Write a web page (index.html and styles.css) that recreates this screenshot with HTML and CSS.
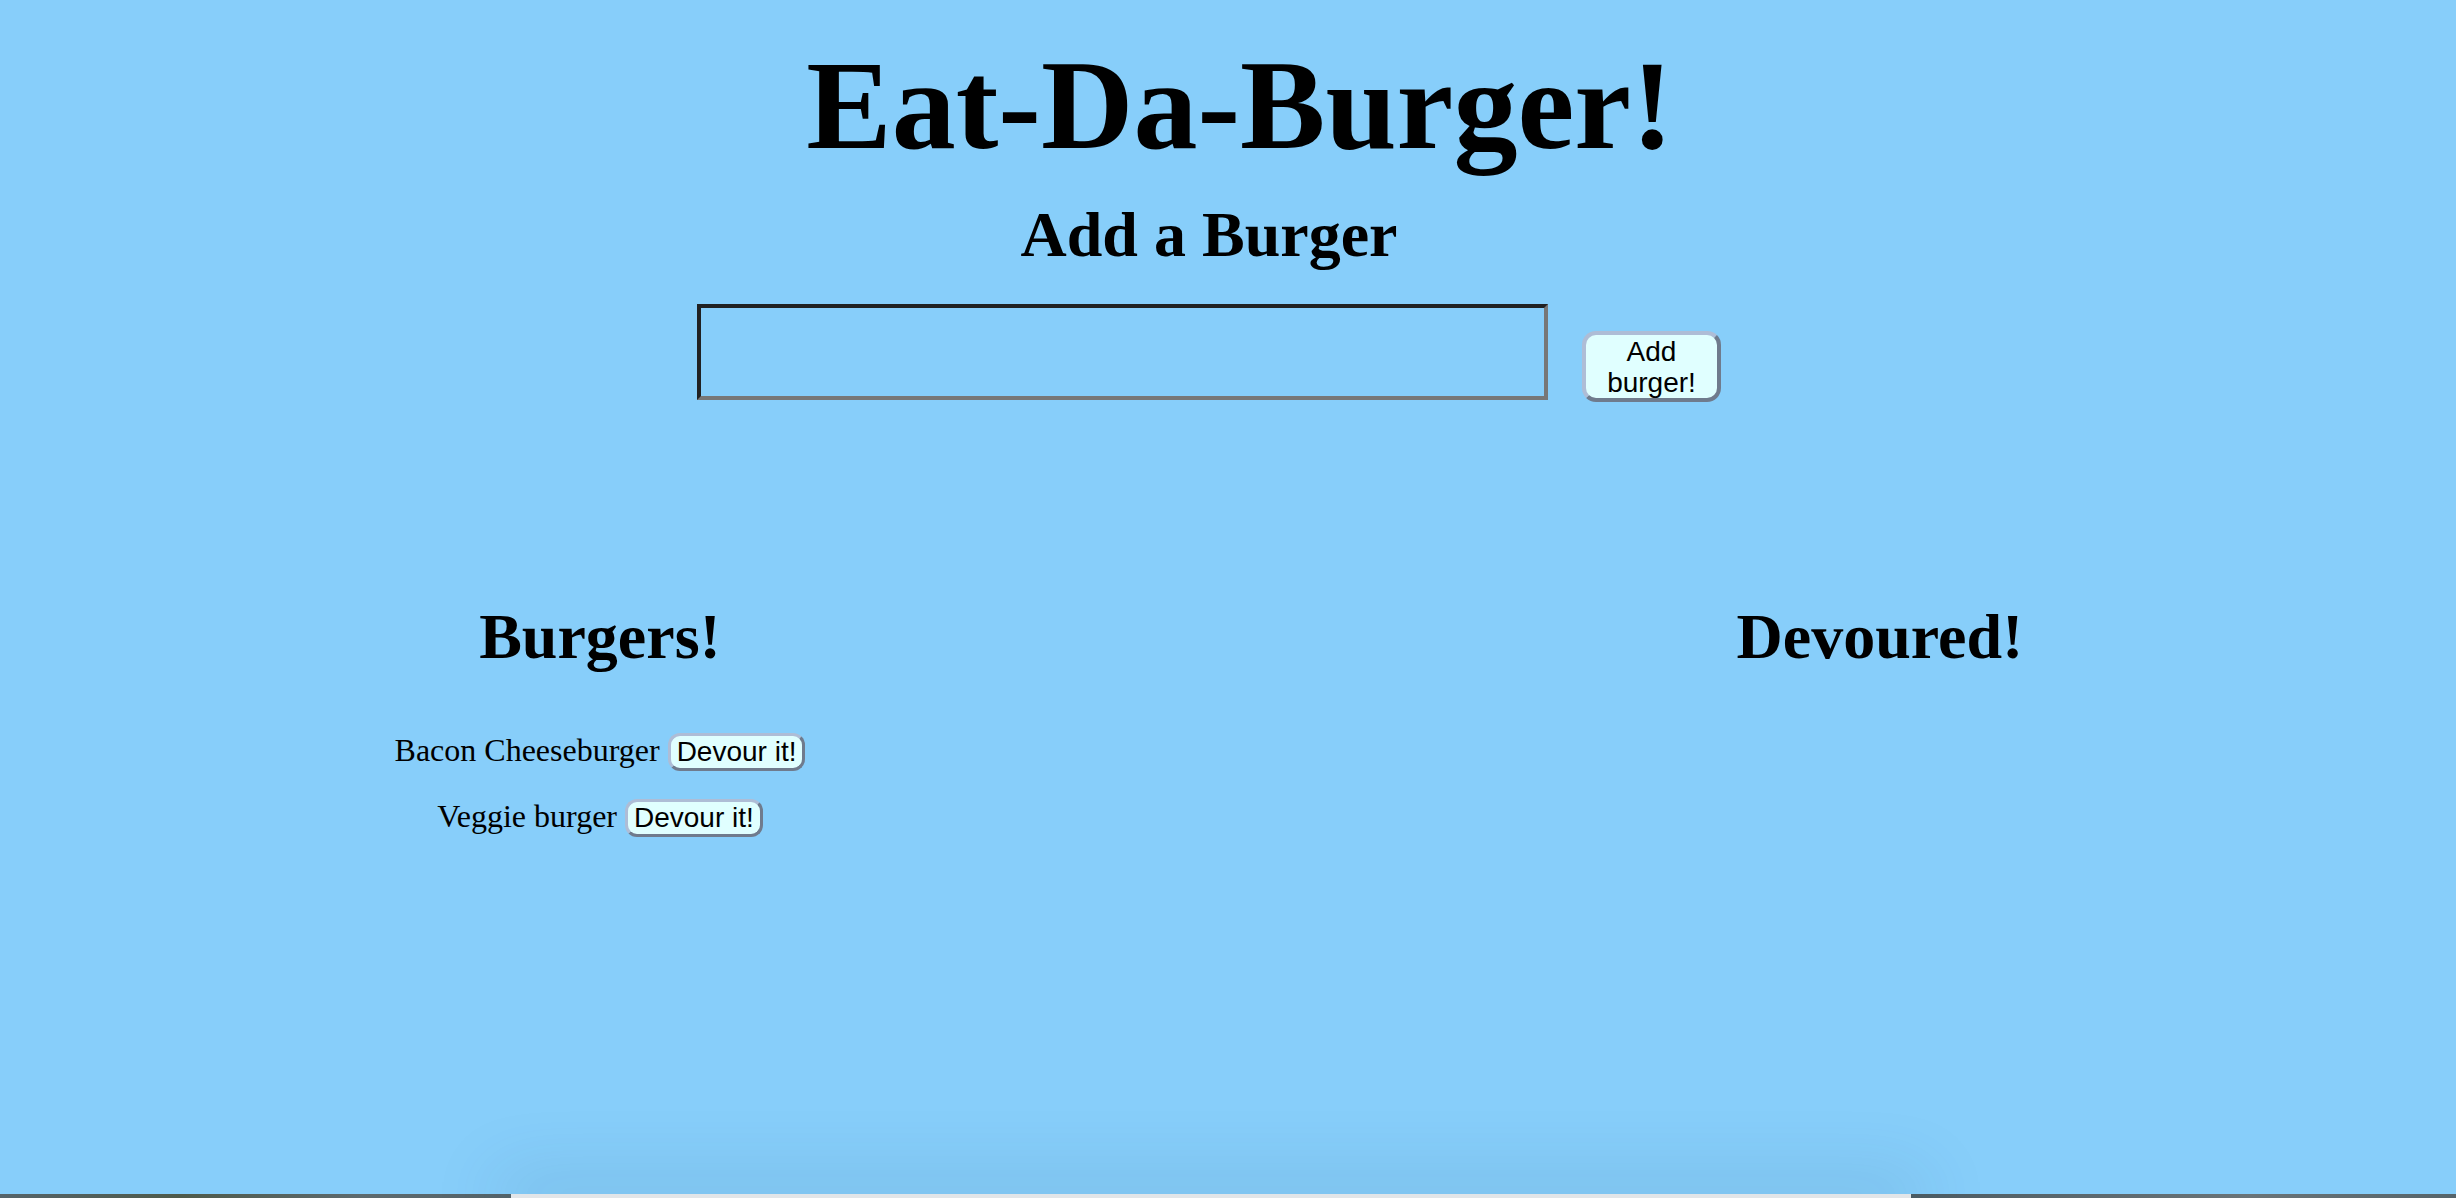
FILE: index.html
```html
<!DOCTYPE html>
<html lang="en">
<head>
<meta charset="utf-8">
<title>Eat-Da-Burger!</title>
<link rel="stylesheet" href="styles.css">
</head>
<body>
<div class="page">
  <header class="top">
    <h1 class="title">Eat-Da-Burger!</h1>
    <section class="add-section">
      <h2 class="subtitle">Add a Burger</h2>
      <form class="add-form">
        <input class="burger-input" type="text" name="burger_name">
        <button class="add-btn" type="button">Add burger!</button>
      </form>
    </section>
  </header>
  <main class="lists">
    <section class="col">
      <h2 class="col-title">Burgers!</h2>
      <div class="item"><span class="item-name">Bacon Cheeseburger</span><button class="devour" type="button">Devour it!</button></div>
      <div class="item"><span class="item-name">Veggie burger</span><button class="devour" type="button">Devour it!</button></div>
    </section>
    <section class="col">
      <h2 class="col-title">Devoured!</h2>
    </section>
  </main>
</div>
<div class="desktop-strip">
  <div class="window-edge"></div>
</div>
</body>
</html>
```

FILE: styles.css
```css
html, body {
  margin: 0;
  padding: 0;
  height: 100%;
}

body {
  background: #87cefa;
  color: #000;
  font-family: "Liberation Serif", "Times New Roman", serif;
  font-size: 32px;
  overflow: hidden;
}

.page {
  padding-left: 24px;
}

.top {
  display: flex;
  flex-direction: column;
  align-items: center;
}

.title {
  margin: 31px 0 0;
  font-size: 128px;
  line-height: 148px;
  font-weight: bold;
  text-align: center;
}

.add-section {
  align-self: stretch;
  display: flex;
  flex-direction: column;
  align-items: center;
  padding-right: 62px;
}

.subtitle {
  margin: 19px 0 0;
  font-size: 64px;
  line-height: 74px;
  font-weight: bold;
}

.add-form {
  margin: 32px 0 0;
  display: flex;
  align-items: flex-end;
  gap: 34px;
}

.burger-input {
  box-sizing: border-box;
  width: 851px;
  height: 96px;
  margin: 0 0 2px;
  padding: 0 4px;
  background: transparent;
  border-style: solid;
  border-width: 4px;
  border-color: #202122 #777777 #777777 #202122;
  font-size: 28px;
  font-family: "Liberation Sans", Arial, sans-serif;
  outline: none;
}

.add-btn,
.devour {
  font-family: "Liberation Sans", Arial, sans-serif;
  font-size: 28px;
  line-height: 31px;
  color: #000;
  background: #e0ffff;
  border-style: solid;
  border-color: #aebdd6 #6f7b8d #6f7b8d #aebdd6;
  cursor: pointer;
}

.add-btn {
  box-sizing: border-box;
  width: 139px;
  height: 71px;
  padding: 1px 8px 0;
  border-width: 4px;
  border-radius: 14px;
  text-align: center;
}

.lists {
  margin-top: 198px;
  display: flex;
  justify-content: center;
  gap: 480px;
}

.col {
  width: 800px;
  display: flex;
  flex-direction: column;
  align-items: center;
}

.col-title {
  margin: 0 0 57px;
  font-size: 64px;
  line-height: 74px;
  font-weight: bold;
}

.item {
  display: flex;
  align-items: baseline;
  gap: 8px;
  margin-bottom: 26px;
}

.item-name {
  line-height: 38px;
}

.devour {
  box-sizing: border-box;
  height: 38px;
  padding: 0 6px;
  border-width: 3px;
  border-radius: 12px;
  line-height: 32px;
}

.desktop-strip {
  position: fixed;
  left: 0;
  right: 0;
  bottom: 0;
  height: 4px;
  background: linear-gradient(to right,
    #55646a 0, #4e5a4a 180px, #5d6a6e 360px, #55646a 511px,
    #4d5c63 1911px, #6a7478 2250px, #55646a 2456px);
}

.window-edge {
  margin-left: 511px;
  width: 1400px;
  height: 4px;
  background: #e2e5e8;
  box-shadow: 0 0 70px 12px rgba(30, 80, 120, 0.22);
}
```
